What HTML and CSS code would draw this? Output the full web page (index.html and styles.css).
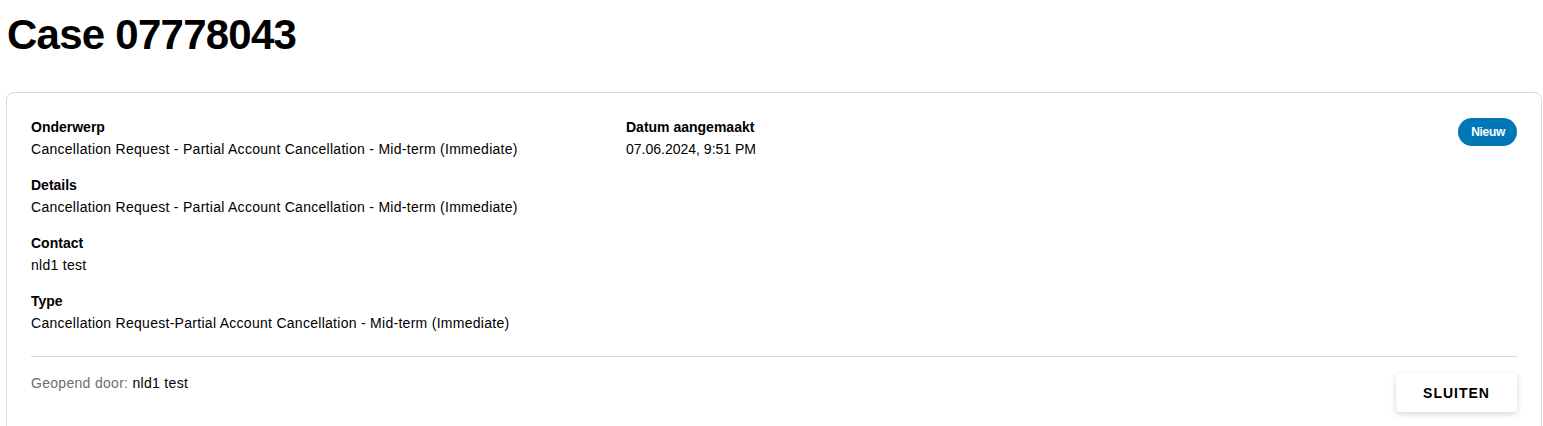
FILE: index.html
```html
<!DOCTYPE html>
<html lang="nl">
<head>
<meta charset="utf-8">
<title>Case 07778043</title>
<link rel="stylesheet" href="styles.css">
</head>
<body>
<div class="page">
  <h1 class="title">Case 07778043</h1>
  <section class="card">
    <div class="card-body">
      <div class="col col-main">
        <div class="field">
          <div class="label">Onderwerp</div>
          <div class="value">Cancellation Request - Partial Account Cancellation - Mid-term (Immediate)</div>
        </div>
        <div class="field">
          <div class="label">Details</div>
          <div class="value">Cancellation Request - Partial Account Cancellation - Mid-term (Immediate)</div>
        </div>
        <div class="field">
          <div class="label">Contact</div>
          <div class="value">nld1 test</div>
        </div>
        <div class="field">
          <div class="label">Type</div>
          <div class="value">Cancellation Request-Partial Account Cancellation - Mid-term (Immediate)</div>
        </div>
      </div>
      <div class="col col-side">
        <div class="field">
          <div class="label">Datum aangemaakt</div>
          <div class="value value-num">07.06.2024, 9:51 PM</div>
        </div>
      </div>
      <div class="status">
        <span class="badge">Nieuw</span>
      </div>
    </div>
    <div class="card-footer">
      <div class="opened"><span class="muted">Geopend door:</span> nld1 test</div>
      <button class="btn" type="button">SLUITEN</button>
    </div>
  </section>
</div>
</body>
</html>
```

FILE: styles.css
```css
* { box-sizing: border-box; }
html, body { margin: 0; padding: 0; background: #fff; }
body {
  font-family: "Liberation Sans", Arial, sans-serif;
  color: #000;
  font-size: 14px;
  line-height: 22px;
}
.page {
  padding: 11px 1px 0 6px;
}
.title {
  margin: 0 0 33px 1px;
  font-size: 42px;
  line-height: 48px;
  font-weight: 700;
  letter-spacing: -0.75px;
}
.card {
  border: 1px solid #dadada;
  border-radius: 8px;
  padding: 23px 24px 30px 24px;
}
.card-body {
  display: flex;
  align-items: flex-start;
}
.col-main {
  width: 595px;
  display: flex;
  flex-direction: column;
  gap: 14px;
}
.col-side {
  flex: 1;
}
.label {
  font-weight: 700;
}
.value {
  letter-spacing: 0.28px;
}
.value-num {
  letter-spacing: 0;
}
.status {
  padding-top: 2px;
}
.badge {
  display: inline-block;
  background: #0077b6;
  color: #fff;
  font-weight: 700;
  font-size: 12px;
  line-height: 28px;
  height: 28px;
  padding: 0 12px 0 13px;
  border-radius: 14px;
  letter-spacing: -0.3px;
}
.card-footer {
  margin-top: 22px;
  border-top: 1px solid #dadada;
  padding-top: 15px;
  display: flex;
  justify-content: space-between;
  align-items: flex-start;
}
.opened {
  letter-spacing: 0.3px;
}
.muted { color: #6e6e6e; }
.btn {
  font-family: "Liberation Sans", Arial, sans-serif;
  font-size: 14px;
  font-weight: 700;
  letter-spacing: 1px;
  color: #000;
  background: #fff;
  border: none;
  border-radius: 4px;
  width: 121px;
  height: 39px;
  margin-top: 1px;
  box-shadow: 0 2px 6px rgba(0, 0, 0, 0.16);
  cursor: pointer;
}
```
